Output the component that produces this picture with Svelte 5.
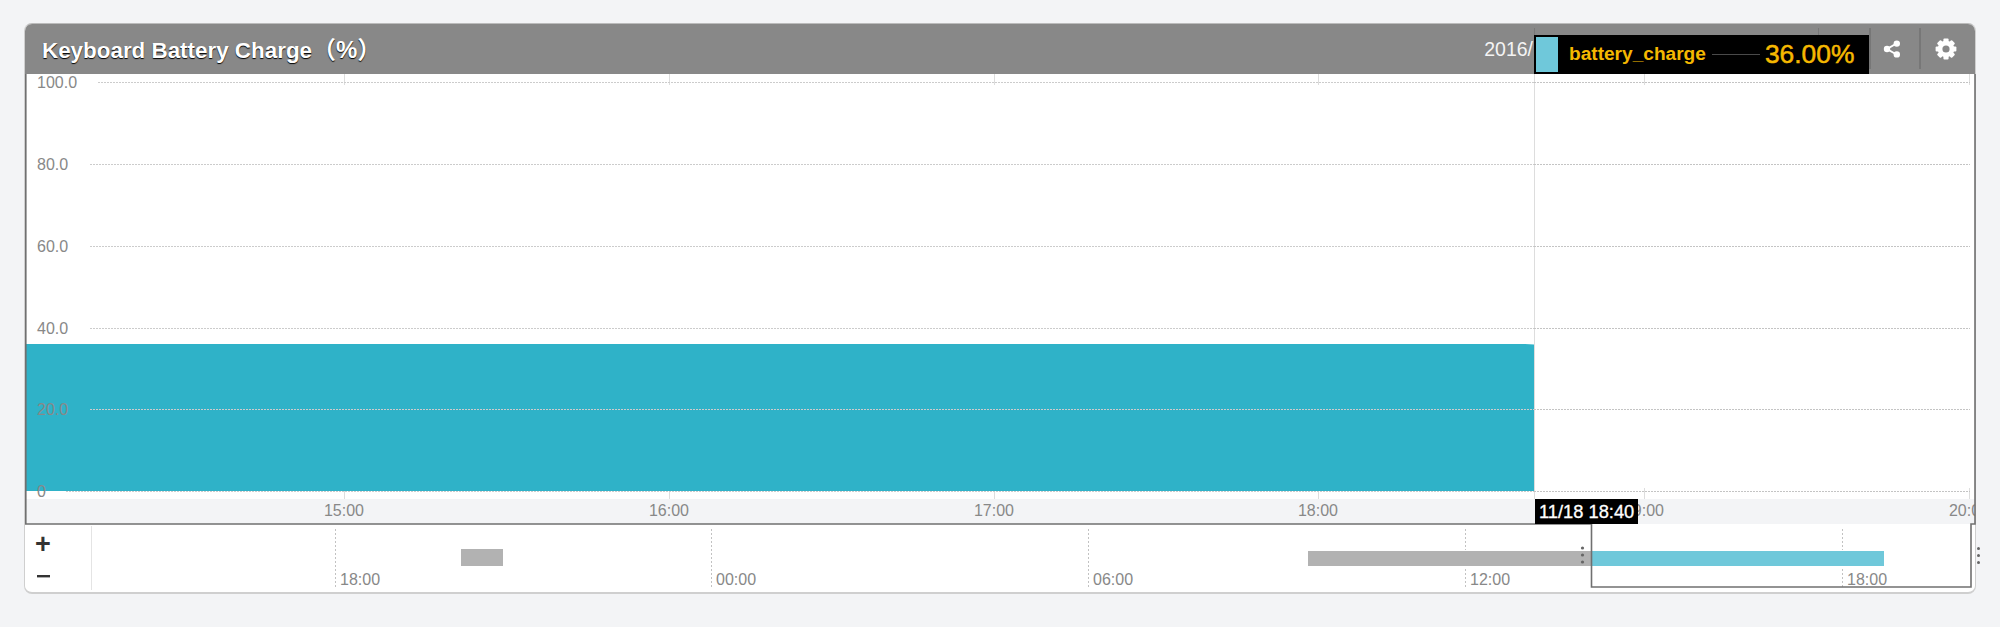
<script>
  const yAxis = [
    { label: '100.0', y: 82, from: 98 },
    { label: '80.0', y: 164, from: 90 },
    { label: '60.0', y: 246, from: 90 },
    { label: '40.0', y: 328, from: 90 },
    { label: '20.0', y: 409, from: 90 },
    { label: '0', y: 491, from: 66 }
  ];
  const xAxis = [
    { label: '15:00', x: 344 },
    { label: '16:00', x: 669 },
    { label: '17:00', x: 994 },
    { label: '18:00', x: 1318 },
    { label: '19:00', x: 1644 },
    { label: '20:00', x: 1969 }
  ];
  const miniAxis = [
    { label: '18:00', x: 335 },
    { label: '00:00', x: 711 },
    { label: '06:00', x: 1088 },
    { label: '12:00', x: 1465 },
    { label: '18:00', x: 1842 }
  ];
  const teeth = [0, 45, 90, 135];
</script>

<div class="page">
  <section class="card">
    <header class="head">
      <h1>Keyboard Battery Charge<span class="unit">（%）</span></h1>
      <span class="date">2016/</span>
      <span class="sep tick-a"></span>
      <span class="sep tick-b"></span>
      <button class="tool share" aria-label="share">
        <svg width="20" height="20" viewBox="0 0 20 20">
          <path d="M14.5 4.5 L5 10 L14.5 15.5" fill="none" stroke="#fff" stroke-width="2" />
          <circle cx="14.8" cy="4.6" r="3.2" fill="#fff" />
          <circle cx="5" cy="10" r="3.2" fill="#fff" />
          <circle cx="14.8" cy="15.4" r="3.2" fill="#fff" />
        </svg>
      </button>
      <button class="tool gear" aria-label="settings">
        <svg width="24" height="24" viewBox="0 0 24 24">
          {#each teeth as a}
            <rect x="9.4" y="1.6" width="5.2" height="20.8" rx="1" fill="#fff" transform="rotate({a} 12 12)" />
          {/each}
          <circle cx="12" cy="12" r="6" fill="none" stroke="#fff" stroke-width="4.6" />
          <circle cx="12" cy="12" r="3.6" fill="#888" />
        </svg>
      </button>
    </header>

    <svg class="chart" width="1950" height="519" viewBox="25 74 1950 519">
      <defs>
        <clipPath id="plotclip"><rect x="25" y="74" width="1950" height="450" /></clipPath>
      </defs>
      <g clip-path="url(#plotclip)">
        <rect x="25" y="499" width="1950" height="25" fill="#f3f4f6" />
        {#each xAxis as t}
          <line x1={t.x + 0.5} x2={t.x + 0.5} y1="74" y2="85" class="tick" />
          <line x1={t.x + 0.5} x2={t.x + 0.5} y1="488" y2="499" class="tick" />
        {/each}
        <line x1="1534.5" x2="1534.5" y1="74" y2="499" class="tick" />
        <path d="M25 344 H1525 L1534 344.6 V491 H25 Z" fill="#2fb2c8" />
        {#each yAxis as g}
          <line x1={g.from} x2="1534" y1={g.y + 0.5} y2={g.y + 0.5} class="grid over" />
          <line x1="1534" x2="1970" y1={g.y + 0.5} y2={g.y + 0.5} class="grid" />
          <text x="37" y={g.y + 6} class="lbl">{g.label}</text>
        {/each}
        {#each xAxis as t}
          <text x={t.x} y="516" text-anchor="middle" class="lbl">{t.label}</text>
        {/each}
      </g>

      <line x1="91.5" x2="91.5" y1="526" y2="590" class="divider" />
      {#each miniAxis as t}
        <line x1={t.x + 0.5} x2={t.x + 0.5} y1="529" y2="588" class="minitick" />
        <text x={t.x + 5} y="585" class="lbl">{t.label}</text>
      {/each}
      <rect x="461" y="549" width="42" height="17" fill="#b2b2b2" />
      <rect x="1308" y="550" width="283" height="17" fill="#fff" />
      <rect x="1308" y="551" width="283" height="15" fill="#b2b2b2" />
      <rect x="1591" y="550" width="293" height="17" fill="#fff" />
      <rect x="1591" y="551" width="293" height="15" fill="#6fc8da" />

      <path class="frame" d="M25.8 74 V524 H1591.5 V587 H1971 V524 H1975 V74" />

      <text x="43" y="553" text-anchor="middle" class="sign">+</text>
      <rect x="37" y="575" width="13" height="2.4" fill="#333" />

      {#each [548, 555, 562] as y}
        <circle cx="1582.5" cy={y} r="1.6" fill="#666" />
      {/each}
    </svg>

    <div class="tip">
      <span class="swatch"></span>
      <span class="name">battery_charge</span>
      <span class="dash"></span>
      <span class="value">36.00%</span>
    </div>
    <div class="stamp">11/18 18:40</div>
    <div class="grip"><i></i><i></i><i></i></div>
  </section>
</div>

<style>
  :global(body) {
    margin: 0;
    background: #f3f4f6;
  }
  .page {
    height: 627px;
    padding: 23px 0 0 24px;
    box-sizing: border-box;
    overflow: hidden;
    font-family: "Liberation Sans", "Noto Sans CJK JP", sans-serif;
  }
  .card {
    position: relative;
    width: 1952px;
    height: 571px;
    box-sizing: border-box;
    background: #fff;
    border: 1px solid #cfcfcf;
    border-top-color: #bbb;
    border-bottom-width: 2px;
    border-radius: 8px;
    display: flex;
    flex-direction: column;
  }
  .head {
    flex: 0 0 50px;
    position: relative;
    display: flex;
    align-items: center;
    background: #888;
    border-radius: 7px 7px 0 0;
    color: #fff;
  }
  h1 {
    margin: 0 0 0 17px;
    font-size: 22.4px;
    font-weight: 700;
    line-height: 1;
    position: relative;
    top: 1px;
    text-shadow: 0 1px 1px #000;
  }
  .unit {
    font-size: 24px;
  }
  .date {
    margin-left: auto;
    margin-right: 442px;
    font-size: 19.5px;
    position: relative;
    top: 0;
    color: #f4f4f4;
  }
  .sep {
    position: absolute;
    top: 4px;
    height: 8px;
    width: 1px;
    background: #777;
  }
  .tick-a { left: 1509px; }
  .tick-b { left: 1793px; }
  .tool {
    position: absolute;
    top: 4px;
    height: 41px;
    width: 50px;
    padding: 0;
    background: none;
    border: 0;
    border-left: 2px solid #777;
    display: flex;
    align-items: flex-start;
    justify-content: center;
  }
  .share {
    left: 1844px;
    padding-top: 11px;
    padding-right: 7px;
    box-sizing: border-box;
  }
  .gear {
    left: 1894px;
    width: 56px;
    padding-top: 9px;
    padding-right: 5px;
    box-sizing: border-box;
  }
  .chart {
    display: block;
    overflow: visible;
  }
  .tick {
    stroke: #ddd;
    stroke-width: 1;
  }
  .grid {
    stroke: #c4c4c4;
    stroke-width: 1;
    stroke-dasharray: 2 1;
  }
  .grid.over {
    stroke: #ccc;
  }
  .minitick {
    stroke: #c2c2c2;
    stroke-width: 1;
    stroke-dasharray: 2 2;
  }
  .divider {
    stroke: #e4e4e4;
  }
  .lbl {
    font-size: 16px;
    fill: #888;
  }
  .sign {
    font-size: 27px;
    font-weight: 700;
    fill: #333;
  }
  .frame {
    fill: none;
    stroke: #707070;
    stroke-width: 1.6;
  }
  .tip {
    position: absolute;
    left: 1509px;
    top: 11px;
    width: 335px;
    height: 39px;
    box-sizing: border-box;
    padding: 2px 0 2px 2px;
    background: #000;
    display: flex;
    align-items: center;
    color: #f5b800;
  }
  .swatch {
    flex: none;
    width: 22px;
    height: 35px;
    background: #6fc8da;
  }
  .name {
    margin-left: 11px;
    font-size: 19.1px;
    font-weight: 700;
    line-height: 1;
    position: relative;
    top: -1px;
  }
  .dash {
    flex: none;
    width: 48px;
    height: 1px;
    margin-left: 6px;
    background: #4a4a4a;
  }
  .value {
    margin-left: 5px;
    font-size: 26.4px;
    line-height: 1;
    -webkit-text-stroke: 0.5px #f5b800;
  }
  .stamp {
    position: absolute;
    left: 1510px;
    top: 475px;
    width: 103px;
    height: 25px;
    box-sizing: border-box;
    padding-left: 4px;
    background: #000;
    color: #fff;
    font-size: 18.3px;
    line-height: 25px;
    white-space: nowrap;
    -webkit-text-stroke: 0.3px #fff;
  }
  .grip {
    position: absolute;
    left: 1952px;
    top: 523px;
    display: flex;
    flex-direction: column;
    gap: 4px;
  }
  .grip i {
    display: block;
    width: 3px;
    height: 3px;
    border-radius: 50%;
    background: #666;
  }
</style>
